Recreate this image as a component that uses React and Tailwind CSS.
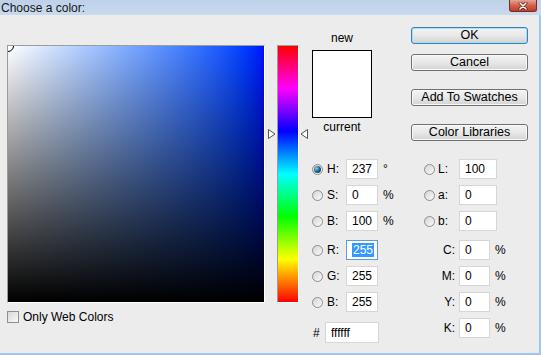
function Radio({ checked }) {
  return (
    <div className="w-[11px] h-[11px] shrink-0 rounded-full border border-[#8d8d8d] bg-linear-to-br from-[#d4d4d4] to-[#fbfbfb] flex items-center justify-center">
      {checked && (
        <div className="w-[7px] h-[7px] rounded-full bg-[radial-gradient(circle_at_35%_35%,#8fd0f0,#15587f_55%,#0a3a5c)]" />
      )}
    </div>
  );
}

function Input({ cls, children, selected }) {
  return (
    <div
      className={`${cls} h-[20px] shrink-0 bg-white border ${
        selected ? "border-[#5a9ee0]" : "border-[#d6d6d6]"
      } flex items-center pl-[5px]`}
    >
      {children}
    </div>
  );
}

function Btn({ children, ok, cls }) {
  return (
    <div
      className={`${cls} h-[17px] w-[117px] flex items-center justify-center rounded-[3px] border text-[12.5px] ${
        ok
          ? "border-[#3c7fb1] shadow-[inset_0_0_0_1px_#a9def7]"
          : "border-[#707070] shadow-[inset_0_0_0_1px_#fafafa]"
      } bg-linear-to-b from-[#f3f3f3] via-[#e8e8e8] to-[#d3d3d3]`}
    >
      {children}
    </div>
  );
}

function HRow({ label, value, unit, checked, selected, cls }) {
  return (
    <div className={`${cls} h-[20px] flex items-center`}>
      <Radio checked={checked} />
      <span className="ml-[4px] w-[19px]">{label}</span>
      <Input cls="w-[32px]" selected={selected}>
        {selected ? (
          <span className="bg-[#3399ff] text-white px-[1px] py-[1px]">{value}</span>
        ) : (
          value
        )}
      </Input>
      <span className="ml-[5px]">{unit}</span>
    </div>
  );
}

function LRow({ label, value, cls }) {
  return (
    <div className={`${cls} h-[20px] flex items-center`}>
      <Radio />
      <span className="ml-[3px] w-[21px]">{label}</span>
      <Input cls="w-[38px]">{value}</Input>
    </div>
  );
}

function CRow({ label, cls }) {
  return (
    <div className={`${cls} h-[20px] flex items-center`}>
      <span className="w-[35px] text-right pr-[4px]">{label}</span>
      <Input cls="w-[31px]">0</Input>
      <span className="ml-[5px]">%</span>
    </div>
  );
}

export default function App() {
  return (
    <div className="w-[541px] h-[355px] overflow-hidden flex flex-col bg-[#ececec] font-['Liberation_Sans',Arial,sans-serif] text-[12px] text-black leading-none">
      <div className="h-[15px] shrink-0 relative bg-linear-to-b from-[#bfd1e9] to-[#c9d9ee] flex items-center pl-[1px]">
        <span className="text-[12px] text-[#151515]">Choose a color:</span>
        <div className="absolute right-[4px] top-0 w-[28px] h-[12px] rounded-b-[3px] border border-t-0 border-[#7a2a20] bg-linear-to-b from-[#e7a393] via-[#d3614b] to-[#bd3d27] flex items-center justify-center">
          <svg width="10" height="8" viewBox="0 0 10 8">
            <path d="M2 1 L8 7 M8 1 L2 7" stroke="#5a1a12" strokeWidth="3" strokeLinecap="round" />
            <path d="M2 1 L8 7 M8 1 L2 7" stroke="#ffffff" strokeWidth="1.6" strokeLinecap="round" />
          </svg>
        </div>
      </div>

      <div className="flex-1 flex border-r-[2px] border-b-[2px] border-[#a8c4e3]">
        <div className="pl-[7px] pt-[30px] flex flex-col">
          <div className="w-[258px] h-[258px] border border-t-[#9c9c9c] border-l-[#9c9c9c] border-r-white border-b-white">
            <div className="relative w-full h-full overflow-hidden bg-linear-to-r from-white to-[#000dff]">
              <div className="w-full h-full bg-linear-to-t from-black to-transparent" />
              <div className="absolute -left-[6px] -top-[6px] w-[12px] h-[12px] rounded-full border border-black" />
            </div>
          </div>
          <div className="mt-[8px] flex items-center">
            <div className="w-[12px] h-[12px] border border-[#8e8f8f] bg-linear-to-br from-[#d8d8d8] to-[#fafafa]" />
            <span className="ml-[4px]">Only Web Colors</span>
          </div>
        </div>

        <div className="relative ml-[3px] w-[39px] pt-[30px]">
          <div className="ml-[9px] w-[22px] h-[258px] border border-t-[#9c9c9c] border-l-[#9c9c9c] border-r-white border-b-white">
            <div className="w-full h-full bg-[linear-gradient(to_bottom,#f00,#f0f,#00f,#0ff,#0f0,#ff0,#f00)]" />
          </div>
          <svg className="absolute left-0 top-[114px]" width="8" height="10" viewBox="0 0 8 10">
            <path d="M0.5 0.5 L7 5 L0.5 9.5 Z" fill="#fff" stroke="#555" strokeWidth="1" strokeLinejoin="round" />
          </svg>
          <svg className="absolute left-[32px] top-[114px]" width="8" height="10" viewBox="0 0 8 10">
            <path d="M7.5 0.5 L1 5 L7.5 9.5 Z" fill="#fff" stroke="#555" strokeWidth="1" strokeLinejoin="round" />
          </svg>
        </div>

        <div className="ml-[5px] flex flex-col">
          <div className="flex">
            <div className="w-[60px] pt-[17px] flex flex-col items-center">
              <span className="h-[12px]">new</span>
              <div className="mt-[6px] w-[60px] h-[68px] border border-black bg-white" />
              <span className="mt-[3px] h-[12px]">current</span>
            </div>
            <div className="ml-[39px] pt-[12px] flex flex-col">
              <Btn ok>OK</Btn>
              <Btn cls="mt-[10px]">Cancel</Btn>
              <Btn cls="mt-[18px]">Add To Swatches</Btn>
              <Btn cls="mt-[18px]">Color Libraries</Btn>
            </div>
          </div>

          <div className="mt-[18px] flex">
            <div className="w-[112px] flex flex-col">
              <HRow label="H:" value="237" unit="°" checked />
              <HRow cls="mt-[6px]" label="S:" value="0" unit="%" />
              <HRow cls="mt-[6px]" label="B:" value="100" unit="%" />
              <HRow cls="mt-[9px]" label="R:" value="255" selected />
              <HRow cls="mt-[6px]" label="G:" value="255" />
              <HRow cls="mt-[6px]" label="B:" value="255" />
              <div className="mt-[10px] h-[21px] flex items-center">
                <span className="w-[13px] pl-[1px]">#</span>
                <Input cls="w-[54px] h-[21px]">ffffff</Input>
              </div>
            </div>
            <div className="flex flex-col">
              <LRow label="L:" value="100" />
              <LRow cls="mt-[6px]" label="a:" value="0" />
              <LRow cls="mt-[6px]" label="b:" value="0" />
              <CRow cls="mt-[9px]" label="C:" />
              <CRow cls="mt-[6px]" label="M:" />
              <CRow cls="mt-[6px]" label="Y:" />
              <CRow cls="mt-[6px]" label="K:" />
            </div>
          </div>
        </div>
      </div>
    </div>
  );
}
